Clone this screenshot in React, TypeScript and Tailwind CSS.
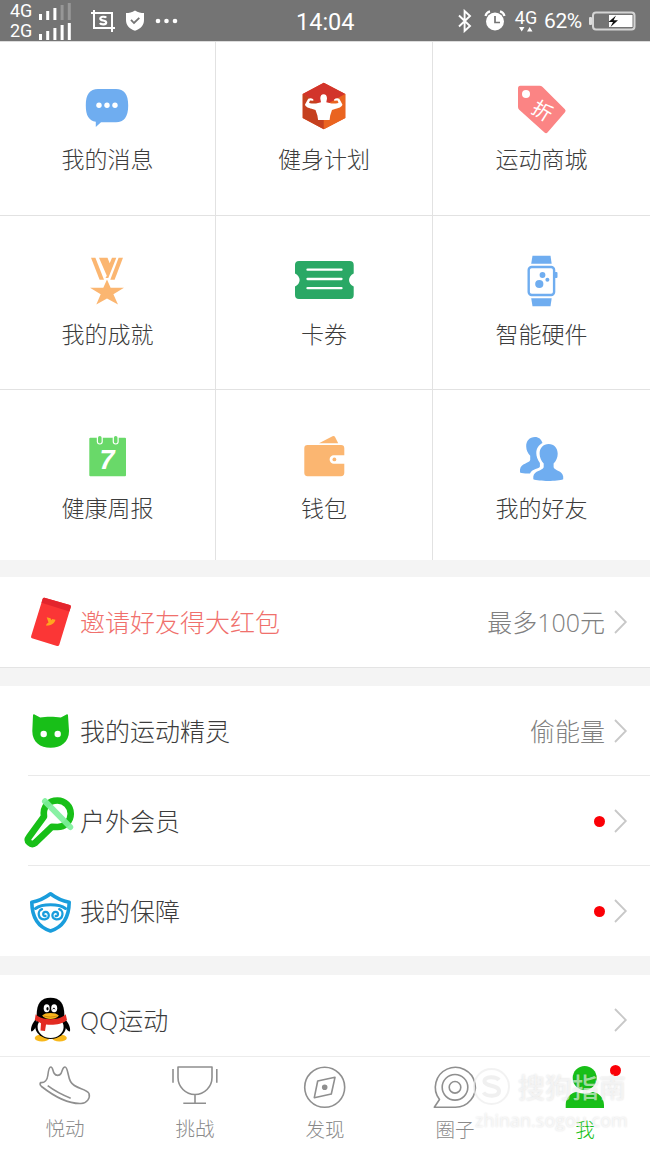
import { ReactNode } from 'react';
import clsx from 'clsx';

const BLUE = '#6fadf0';
const ORANGE = '#fbb671';
const GREEN = '#18bf18';

/* ---------- Status bar ---------- */

function Signal({ faded }: { faded?: boolean }) {
  const heights = [6, 9, 12, 15, 17];
  return (
    <svg width="34" height="17" viewBox="0 0 34 17">
      {heights.map((h, i) => (
        <rect key={h} x={1 + i * 7.2} y={17 - h} width="3" height={h} fill="#fff" opacity={faded && i > 2 ? 0.25 : 1} />
      ))}
    </svg>
  );
}

function StatusBar() {
  return (
    <header className="relative flex h-[41px] shrink-0 items-center bg-[#747474] font-normal text-white font-[Roboto,sans-serif]">
      <div className="flex w-[72px] flex-col pl-[10px] pt-px text-[18px] leading-[18px]">
        <div className="flex h-[20px] items-center justify-between">
          <span>4G</span>
          <Signal faded />
        </div>
        <div className="flex h-[20px] items-center justify-between">
          <span>2G</span>
          <Signal />
        </div>
      </div>
      <svg className="ml-[19px]" width="25" height="22" viewBox="0 0 25 22" fill="none" stroke="#fff" strokeWidth="2">
        <path d="M0 3H21V22M3 0V18H24" />
        <path d="M15.2 7.7C14.3 6.4 9.3 6.2 9.3 8.7C9.3 11.2 15.2 9.8 15.2 12.4C15.2 15 10 14.8 8.9 13.1" strokeWidth="2.2" />
      </svg>
      <svg className="ml-[9px]" width="20" height="21" viewBox="0 0 20 21">
        <path d="M10 0.5C13 2.4 16 3 19 3V10C19 15.3 15.5 18.8 10 20.8C4.5 18.8 1 15.3 1 10V3C4 3 7 2.4 10 0.5Z" fill="#fff" />
        <path d="M6 9.8L9 13L14.3 7.8" fill="none" stroke="#747474" strokeWidth="1.8" />
      </svg>
      <svg className="ml-[10px]" width="24" height="6" viewBox="0 0 24 6" fill="#fff">
        <circle cx="3" cy="3" r="2.3" />
        <circle cx="11.5" cy="3" r="2.3" />
        <circle cx="20" cy="3" r="2.3" />
      </svg>
      <span className="absolute left-[296px] top-[8px] text-[23.5px] leading-[28px]">14:04</span>
      <div className="ml-auto flex items-center pr-[14px]">
        <svg width="16" height="24" viewBox="0 0 16 24" fill="none" stroke="#fff" strokeWidth="1.9">
          <path d="M2 6.5L13 17L7.6 22V2L13 7L2 17.5" />
        </svg>
        <svg className="ml-[11px]" width="22" height="22" viewBox="0 0 22 22">
          <circle cx="11" cy="11.5" r="9" fill="#fff" />
          <path d="M1.5 6C2 3.8 3.7 2 6 1.4M20.5 6C20 3.8 18.3 2 16 1.4" stroke="#fff" strokeWidth="2.2" fill="none" />
          <path d="M11 6V12.5H16" fill="none" stroke="#747474" strokeWidth="1.7" />
        </svg>
        <div className="ml-[8px] flex w-[24px] flex-col items-center">
          <span className="text-[18px] leading-[17px]">4G</span>
          <svg width="16" height="6" viewBox="0 0 16 6" fill="#fff">
            <path d="M1 1H6.5L3.7 5.5ZM9 5.5H14.5L11.7 1Z" />
          </svg>
        </div>
        <span className="ml-[6px] w-[41px] text-[21px] leading-[22px] tracking-[-0.4px]">62%</span>
        <svg className="ml-[4px]" width="47" height="20" viewBox="0 0 47 20">
          <rect x="0" y="6" width="3" height="8" rx="1" fill="#ddd" />
          <rect x="4" y="1.5" width="41.5" height="17" rx="3" fill="none" stroke="#d4d4d4" strokeWidth="2" />
          <rect x="20" y="4" width="23.5" height="12" fill="#fff" />
          <path d="M27 4.5L19.5 11H24L21.5 16L29 9.3H24.6Z" fill="#111" />
        </svg>
      </div>
    </header>
  );
}

/* ---------- Grid icons, all on a 64x60 canvas ---------- */

function GridSvg({ children }: { children: ReactNode }) {
  return <svg width="64" height="60" viewBox="0 0 64 60">{children}</svg>;
}

const messageIcon = (
  <GridSvg>
    <path d="M22 11H40C48 11 52.2 16 52.2 27.5C52.2 39 48 44.3 40 44.3H25L19.8 49V43.8C13 42.5 9.8 38 9.8 27.5C9.8 16 14 11 22 11Z" fill={BLUE} />
    <circle cx="23" cy="27.3" r="2.7" fill="#fff" />
    <circle cx="31" cy="27.3" r="2.7" fill="#fff" />
    <circle cx="39" cy="27.3" r="2.7" fill="#fff" />
  </GridSvg>
);

const fitnessIcon = (
  <GridSvg>
    <path d="M31.8 4.7L53.3 16V40L31.8 51.3L10.7 40V16Z" fill="#e4551f" />
    <path d="M31.8 4.7L53.3 16L31.8 28L10.7 16Z" fill="#d2342b" />
    <path d="M10.7 16L31.8 28V51.3L10.7 40Z" fill="#c5401f" />
    <path d="M31.8 28L53.3 16V40L31.8 51.3Z" fill="#ea6420" />
    <path
      d="M28.3 20.5C28.3 17.8 29.5 16.3 31.6 16.3S35 17.8 35 20.5L34.3 24.3L39.5 25.5C42.5 25.3 45.5 25.7 46.5 24.7L45.5 22.5L42.3 22.8C41.3 21.8 42.6 20.3 45.2 20.2L47.3 20.8L50.4 26.5C50.2 28.7 47 30 43.8 30.7L40 32L38.2 37.5L37.6 42H26.1L25.4 37.5L23.5 32L19.7 30.7C16.4 30 13.2 28.7 13 26.5L16.2 20.8L18.3 20.2C20.9 20.3 22.2 21.8 21.2 22.8L18 22.5L17 24.7C18 25.7 21 25.3 24 25.5L29 24.3Z"
      fill="#fff"
    />
  </GridSvg>
);

const mallIcon = (
  <GridSvg>
    <path d="M10.2 7.7H29.5Q31.3 7.7 32.6 9L54.9 31.3Q56.3 32.8 55 34.2L37.7 54.3Q36.2 56 34.5 54.5L9.2 31.7Q8 30.6 8 29V10.4Q8 7.7 10.2 7.7Z" fill="#fb8484" />
    <circle cx="16" cy="16" r="4" fill="#fff" />
    <text x="32.3" y="40" textAnchor="middle" fontSize="20" fontWeight="400" fill="#fff" transform="rotate(32 32.3 33)">折</text>
  </GridSvg>
);

const achievementIcon = (
  <GridSvg>
    <g fill={ORANGE}>
      <path d="M15 5.7H19.4L28 27.7H23.6Z" />
      <path d="M23 5.7H31.5L33.7 11.2L36 5.7H40.3L32.3 26H29.5L30.8 23.8Z" />
      <path d="M42.6 5.7H47L38.6 27.7H34.3Z" />
      <path d="M31 27.5L34.6 35.7H48L37.4 42.3L42 52.5L31 46.4L20.3 52.5L24.7 42.3L14 35.7H27.3Z" />
    </g>
  </GridSvg>
);

const couponIcon = (
  <GridSvg>
    <path d="M7 9H57.7Q61.7 9 61.7 13V21.5C55.5 24.5 55.5 31.5 61.7 34.5V43Q61.7 47 57.7 47H7Q3 47 3 43V34.5C9.2 31.5 9.2 24.5 3 21.5V13Q3 9 7 9Z" fill="#2aa865" />
    <path d="M15.5 17.7H49.5M15.5 27H49.5M15.5 36.2H49.5" stroke="#fff" strokeWidth="2.3" strokeLinecap="round" />
  </GridSvg>
);

const watchIcon = (
  <GridSvg>
    <g fill={BLUE}>
      <path d="M22.5 3.7H40.5L41.7 11.7H21.2Z" />
      <path d="M21.2 46.2H41.7L40.5 54.3H22.5Z" />
      <rect x="44.5" y="20" width="3" height="6" rx="1" />
      <circle cx="32.5" cy="23" r="2.9" />
      <circle cx="29.3" cy="32" r="4.1" />
      <circle cx="37.4" cy="27.8" r="2" />
    </g>
    <rect x="18.7" y="15" width="25.4" height="28" rx="3" fill="none" stroke={BLUE} strokeWidth="2.4" />
  </GridSvg>
);

const reportIcon = (
  <GridSvg>
    <rect x="13.3" y="11.7" width="36.7" height="38.5" rx="1" fill="#69d969" />
    <rect x="20.8" y="9" width="6" height="9.5" rx="3" fill="#fff" />
    <rect x="36.7" y="9" width="6" height="9.5" rx="3" fill="#fff" />
    <rect x="22" y="10" width="3.6" height="7.5" rx="1.8" fill="#69d969" />
    <rect x="37.9" y="10" width="3.6" height="7.5" rx="1.8" fill="#69d969" />
    <text x="31" y="43.4" textAnchor="middle" fontSize="27" fontWeight="700" fontStyle="italic" fontFamily="Liberation Sans, sans-serif" fill="#fff">7</text>
  </GridSvg>
);

const walletIcon = (
  <GridSvg>
    <g fill={ORANGE}>
      <path d="M27 17.2L40.5 10.3Q42.3 9.6 43.3 11.4L46.2 17.2Z" />
      <path d="M15.5 19H49Q52.3 19 52.3 22.3V29.3H41.8A4.2 4.2 0 0 0 41.8 37.7H52.3V46.8Q52.3 50.2 49 50.2H15.5Q12.3 50.2 12.3 46.8V22.3Q12.3 19 15.5 19Z" />
      <circle cx="42.4" cy="33.4" r="1.9" />
    </g>
  </GridSvg>
);

const friendsIcon = (
  <GridSvg>
    <g fill={BLUE}>
      <path d="M25 11C19.5 11 16 15 16.2 20.5C16.3 24.2 17.7 27.2 20.2 29.7V34C19.1 37.5 11 37 10 43.5V46.5C12.5 47.5 16.5 47.8 20 47.5C22.5 42 29 43.5 29.9 40.5V37C27.5 34 26.3 30 26.3 27C26.3 22.5 28.8 18.7 32.5 17C31.3 13.3 28.8 11 25 11Z" />
      <path d="M38.7 18C33.3 18 29.5 22 29.6 27.7C29.7 31.4 31.2 35 33.7 37.4V41.3C32.5 45 24.3 44.2 23.3 50.6V53.3C29 55.6 47.5 55.6 53.2 53.3V50.6C52.3 44.2 44.7 45 43.6 41.3V37.4C46.2 35 47.7 31.4 47.7 27.7C47.7 22 44.1 18 38.7 18Z" />
    </g>
  </GridSvg>
);

const gridItems = [
  { label: '我的消息', icon: messageIcon },
  { label: '健身计划', icon: fitnessIcon },
  { label: '运动商城', icon: mallIcon },
  { label: '我的成就', icon: achievementIcon },
  { label: '卡券', icon: couponIcon },
  { label: '智能硬件', icon: watchIcon },
  { label: '健康周报', icon: reportIcon },
  { label: '钱包', icon: walletIcon },
  { label: '我的好友', icon: friendsIcon },
];

/* ---------- List icons, all on a 60x60 canvas ---------- */

function ListSvg({ children }: { children: ReactNode }) {
  return <svg className="shrink-0" width="60" height="60" viewBox="0 0 60 60">{children}</svg>;
}

const packetIcon = (
  <ListSvg>
    <path d="M24.5 5.8L49.8 13Q51.3 13.6 50.8 15L39.3 52.8Q38.7 54.5 37 54L12 46.2Q10.6 45.6 11.1 44.2L22.6 7Q23.2 5.5 24.5 5.8Z" fill="#fb3636" />
    <path d="M24.5 5.8L49.8 13Q51.3 13.6 50.8 15L49.4 19.6L21.5 10.7L22.6 7Q23.2 5.5 24.5 5.8Z" fill="#e3252d" />
    <path d="M26.7 25.2L30.5 26.3L31.3 28.2L32.2 26.9L35.5 27.8C34.5 31.5 31.5 33.5 26.2 33.8L26.5 31.9L28.5 30.5Z" fill="#ffa51f" />
  </ListSvg>
);

const catIcon = (
  <ListSvg>
    <path d="M13 14.2C13 13.4 13.8 13.1 14.5 13.5L20.2 16.6C26 15.3 34.5 15.3 40.8 16.6L46.5 13.5C47.2 13.1 48 13.4 48 14.2L49 30C49 41 41 46.8 30.6 46.8S12.3 41 12.3 30Z" fill={GREEN} />
    <circle cx="23.7" cy="33" r="3.2" fill="#fff" />
    <circle cx="37.7" cy="33" r="3.2" fill="#fff" />
  </ListSvg>
);

const outdoorIcon = (
  <ListSvg>
    <path d="M24 25.5C22.5 15 29 9.5 37.5 9.5A13.2 13.2 0 0 1 37.5 36L31.8 35.8L15 52Q12 54.2 9.3 51.7T8.7 46.5Z" fill="none" stroke={GREEN} strokeWidth="6.6" strokeLinejoin="round" />
    <path d="M25 10.3L50.2 36" stroke="#7ff09c" strokeOpacity="0.92" strokeWidth="6" strokeLinecap="round" />
  </ListSvg>
);

const shieldIcon = (
  <ListSvg>
    <g fill="none" stroke="#1a9ddc" strokeLinecap="round" strokeLinejoin="round">
      <path d="M30.5 12.8C25 17 19 20 11.8 21.3C12 36 17.5 46 30.5 50C43.5 46 49 36 49.2 21.3C42 20 36 17 30.5 12.8Z" strokeWidth="3.6" />
      <path d="M15.5 27.5C22 22.6 39 22.6 45.5 27.5" strokeWidth="3" />
      <path d="M25.5 35C22.6 35.6 22.3 31.2 25.6 30.9C29.6 30.7 30.3 37.8 25 38.3C17.5 38.6 17 29.8 22 28.2" strokeWidth="2.3" />
      <path d="M35.7 35C38.6 35.6 38.9 31.2 35.6 30.9C31.6 30.7 30.9 37.8 36.2 38.3C43.7 38.6 44.2 29.8 39.2 28.2" strokeWidth="2.3" />
    </g>
  </ListSvg>
);

const penguinIcon = (
  <ListSvg>
    <ellipse cx="22" cy="48" rx="7.3" ry="3.6" fill="#f8b81c" />
    <ellipse cx="39.5" cy="48" rx="7.3" ry="3.6" fill="#f8b81c" />
    <path d="M17 28C12 33 10.5 38 11.2 41.3C12.4 42 14.5 39.5 16 37ZM44 28C49 33 50.7 38 50 41.3C48.7 42 46.5 39.5 45 37Z" fill="#000" />
    <ellipse cx="30.6" cy="36.5" rx="15.4" ry="12.4" fill="#000" />
    <ellipse cx="30.6" cy="37" rx="13" ry="11" fill="#fff" />
    <path d="M16.7 27C16.2 14 20.5 7.7 30.5 7.7S44.8 14 44.3 27C40 31 21 31 16.7 27Z" fill="#000" />
    <ellipse cx="26.7" cy="18.3" rx="3" ry="4" fill="#fff" />
    <ellipse cx="34.2" cy="18.3" rx="3" ry="4" fill="#fff" />
    <ellipse cx="27.5" cy="18.7" rx="1.1" ry="1.8" fill="#000" />
    <path d="M32.8 19.3Q33.8 16.5 35 19.3" fill="none" stroke="#000" strokeWidth="0.9" />
    <path d="M15.7 24.3C22 31 39 31 45.7 24.3L47 30C42 34.5 34 35.3 26 34.6L25 41L20.5 40.5L21 33.3L14.8 30Z" fill="#e32b22" />
    <path d="M22.2 25.5C25 22.2 36 22.2 38.8 25.5C36 30.2 25 30.2 22.2 25.5Z" fill="#f9b51b" />
    <path d="M23.5 26Q30.5 28.2 37.5 26" fill="none" stroke="#bd7a0c" strokeWidth="0.7" />
  </ListSvg>
);

interface ListRowProps {
  icon: ReactNode;
  label: string;
  value?: string;
  dot?: boolean;
  highlight?: boolean;
}

function ListRow({ icon, label, value, dot, highlight }: ListRowProps) {
  return (
    <div className="flex h-[90px] items-center pl-[20px] pr-[22px] text-[25px] leading-[36px] font-['Open_Sans','Noto_Sans_CJK_SC',sans-serif]">
      {icon}
      <span className={highlight ? 'text-[#f0706c]' : 'text-[#3c3c3c]'}>{label}</span>
      <span className="ml-auto text-[#808080]">{value}</span>
      {dot && <span className="h-[11px] w-[11px] rounded-full bg-[#fb0007]" />}
      <svg className="ml-[9px]" width="14" height="24" viewBox="0 0 14 24" fill="none" stroke="#c8c8c8" strokeWidth="1.8">
        <path d="M1 1L11.8 12L1 23" />
      </svg>
    </div>
  );
}

/* ---------- Bottom tabs ---------- */

const tabs = [
  {
    label: '悦动',
    icon: <path d="M5.6 20.6C9.5 21 12.3 18 12.8 13.5C13.3 9 14 5 15.8 5C18 5 17.5 9 19.3 11.5C20.8 14 24.5 14 26 11.5C27.5 9 27.5 5 30 5C33 5 32.5 14 35.5 19.5C40 27.5 51 25.8 54 31.5C55.5 36 52 41.3 46 41.5C33 42 18 33.5 6.5 24.5C4.8 23 4.8 21.5 5.6 20.6ZM12.7 23.7C19 28.5 27.5 33 35.7 36.3" />,
  },
  {
    label: '挑战',
    icon: <path d="M13 5H47V15.5A17 17 0 0 1 13 15.5ZM30 32.5V41.3M18.3 41.3H41M8 7V20.7M51.8 7V20.7" />,
  },
  {
    label: '发现',
    icon: (
      <>
        <circle cx="29.7" cy="25.3" r="20" />
        <path d="M22.7 19L40 15.3L36.3 32L19.3 35.7Z" />
        <circle cx="29.7" cy="25.3" r="2" fill="#8f8f8f" />
      </>
    ),
  },
  {
    label: '圈子',
    icon: (
      <>
        <path d="M9.3 45.3L14.5 37.5A20 20 0 1 1 30 45.3Z" />
        <circle cx="30" cy="25.3" r="12.8" />
        <circle cx="30" cy="25.3" r="5.8" />
      </>
    ),
  },
  {
    label: '我',
    active: true,
    icon: (
      <g fill={GREEN} stroke="none">
        <circle cx="29.7" cy="16" r="12" />
        <path d="M10.7 46V43C10.7 35 16.5 30.5 22 30C26 32.3 33.5 32.3 37.5 30C43 30.5 49 35 49 43V46Z" />
      </g>
    ),
  },
];

function Watermark() {
  return (
    <div className="absolute left-[472px] top-[10px] w-[160px] text-white/60 [text-shadow:0_0_2px_rgba(0,0,0,0.14)]">
      <div className="flex items-center gap-[7px]">
        <svg width="39" height="39" viewBox="0 0 39 39" fill="none">
          <circle cx="19.5" cy="19.5" r="17.5" stroke="#ececec" strokeOpacity="0.7" strokeWidth="2" />
          <path d="M27 13C24 9 12 9 12.5 14.5C13 20 27 17.5 27 24C27 30 14.5 30 11.5 25.5" stroke="#ececec" strokeOpacity="0.8" strokeWidth="4" />
        </svg>
        <span className="whitespace-nowrap text-[27px] font-medium leading-[39px]">搜狗指南</span>
      </div>
      <div className="pl-[3px] text-[18px] font-normal leading-[28px] font-['Open_Sans',sans-serif]">zhinan.sogou.com</div>
    </div>
  );
}

export default function App() {
  return (
    <div className="flex h-[1155px] w-[650px] flex-col overflow-hidden bg-[#f4f4f4] font-light font-['Noto_Sans_CJK_SC',sans-serif]">
      <StatusBar />

      <div className="grid h-[519px] shrink-0 grid-cols-[216px_217px_217px] grid-rows-[174px_174px_170px] border-t border-[#dcdcdc] bg-white">
        {gridItems.map((item, index) => (
          <div
            key={item.label}
            className={clsx(
              'flex flex-col items-center border-[#e2e2e2] pt-[36px]',
              index % 3 < 2 && 'border-r',
              index < 6 && 'border-b',
            )}
          >
            {item.icon}
            <span className={clsx('text-[23px] leading-[34px] text-[#3c3c3c]', index < 3 ? 'mt-[3px]' : 'mt-[4px]')}>
              {item.label}
            </span>
          </div>
        ))}
      </div>

      <div className="mt-[17px] h-[91px] shrink-0 border-b border-[#e4e4e4] bg-white">
        <ListRow icon={packetIcon} label="邀请好友得大红包" value="最多100元" highlight />
      </div>

      <div className="mt-[18px] h-[270px] shrink-0 bg-white">
        <ListRow icon={catIcon} label="我的运动精灵" value="偷能量" />
        <div className="ml-[28px] -mt-px h-px bg-[#e9e9e9]" />
        <ListRow icon={outdoorIcon} label="户外会员" dot />
        <div className="ml-[28px] -mt-px h-px bg-[#e9e9e9]" />
        <ListRow icon={shieldIcon} label="我的保障" dot />
      </div>

      <div className="mt-[19px] h-[81px] shrink-0 overflow-hidden bg-white">
        <ListRow icon={penguinIcon} label="QQ运动" />
      </div>

      <nav className="relative grid h-[99px] shrink-0 grid-cols-5 border-t border-[#ececec] bg-white">
        {tabs.map((tab, index) => (
          <div key={tab.label} className="flex flex-col items-center pt-[5px]">
            <svg width="60" height="50" viewBox="0 0 60 50" fill="none" stroke="#8f8f8f" strokeWidth="1.6" strokeLinejoin="round">
              {tab.icon}
            </svg>
            <span
              className={clsx(
                'text-[19.5px] leading-[30px]',
                index < 2 ? 'mt-px' : 'mt-[2px]',
                tab.active ? 'text-[#18bf18]' : 'text-[#8a8a8a]',
              )}
            >
              {tab.label}
            </span>
          </div>
        ))}
        <span className="absolute left-[610px] top-[8px] h-[11px] w-[11px] rounded-full bg-[#fb0007]" />
        <Watermark />
      </nav>
    </div>
  );
}
